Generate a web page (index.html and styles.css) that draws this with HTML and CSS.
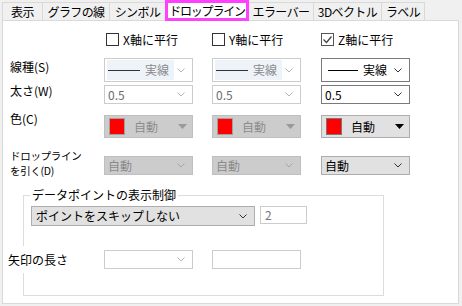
FILE: index.html
```html
<!DOCTYPE html>
<html lang="ja">
<head>
    <meta charset="UTF-8">
    <title>ドロップライン</title>
    <link rel="stylesheet" href="styles.css">
</head>
<body>
    <div class="tabs">
        <div class="tab t-1">表示</div>
        <div class="tab t-2">グラフの線</div>
        <div class="tab t-3">シンボル</div>
        <div class="tab t-4 active">ドロップライン</div>
        <div class="tab t-5">エラーバー</div>
        <div class="tab t-6">3Dベクトル</div>
        <div class="tab t-7">ラベル</div>
    </div>

    <div class="panel">
        <!-- 軸に平行 -->
        <div class="row r-check">
            <div class="label"></div>
            <label class="cell check c1"><span class="box"></span>X軸に平行</label>
            <label class="cell check c2"><span class="box"></span>Y軸に平行</label>
            <label class="cell check c3"><span class="box checked"><svg width="11" height="11" viewBox="0 0 11 11"><polyline points="1.5,5.5 4.5,8.5 9.5,2.5" fill="none" stroke="#444" stroke-width="1.3"/></svg></span>Z軸に平行</label>
        </div>

        <div class="row r-line">
            <div class="label lb-line">線種(S)</div>
            <div class="cell combo off">
                <div class="lt hl"><span class="stroke"></span><span>実線</span></div>
                <svg class="chev" width="8" height="5" viewBox="0 0 8 5"><polyline points="0.5,0.5 4,4 7.5,0.5" fill="none" stroke="currentColor"/></svg>
            </div>
            <div class="cell combo off c2">
                <div class="lt hl"><span class="stroke"></span><span>実線</span></div>
                <svg class="chev" width="8" height="5" viewBox="0 0 8 5"><polyline points="0.5,0.5 4,4 7.5,0.5" fill="none" stroke="currentColor"/></svg>
            </div>
            <div class="cell combo on c3">
                <div class="lt"><span class="stroke"></span><span>実線</span></div>
                <svg class="chev" width="8" height="5" viewBox="0 0 8 5"><polyline points="0.5,0.5 4,4 7.5,0.5" fill="none" stroke="currentColor"/></svg>
            </div>
        </div>

        <div class="row r-width">
            <div class="label lb-width">太さ(W)</div>
            <div class="cell combo off">
                <span class="val">0.5</span>
                <svg class="chev" width="8" height="5" viewBox="0 0 8 5"><polyline points="0.5,0.5 4,4 7.5,0.5" fill="none" stroke="currentColor"/></svg>
            </div>
            <div class="cell combo off c2">
                <span class="val">0.5</span>
                <svg class="chev" width="8" height="5" viewBox="0 0 8 5"><polyline points="0.5,0.5 4,4 7.5,0.5" fill="none" stroke="currentColor"/></svg>
            </div>
            <div class="cell combo on c3">
                <span class="val">0.5</span>
                <svg class="chev" width="8" height="5" viewBox="0 0 8 5"><polyline points="0.5,0.5 4,4 7.5,0.5" fill="none" stroke="currentColor"/></svg>
            </div>
        </div>

        <div class="row r-color">
            <div class="label lb-color">色(C)</div>
            <div class="cell colorbtn off">
                <span class="swatch"></span><span class="val">自動</span>
                <svg class="tri" width="9" height="5" viewBox="0 0 9 5"><polygon points="0,0 9,0 4.5,5" fill="currentColor"/></svg>
            </div>
            <div class="cell colorbtn off c2">
                <span class="swatch"></span><span class="val">自動</span>
                <svg class="tri" width="9" height="5" viewBox="0 0 9 5"><polygon points="0,0 9,0 4.5,5" fill="currentColor"/></svg>
            </div>
            <div class="cell colorbtn on c3">
                <span class="swatch"></span><span class="val">自動</span>
                <svg class="tri" width="9" height="5" viewBox="0 0 9 5"><polygon points="0,0 9,0 4.5,5" fill="currentColor"/></svg>
            </div>
        </div>

        <div class="row r-drop">
            <div class="label lb-drop">ドロップライン<br>を引く(D)</div>
            <div class="cell combo grey off">
                <span class="val">自動</span>
                <svg class="chev" width="8" height="5" viewBox="0 0 8 5"><polyline points="0.5,0.5 4,4 7.5,0.5" fill="none" stroke="currentColor"/></svg>
            </div>
            <div class="cell combo grey off c2">
                <span class="val">自動</span>
                <svg class="chev" width="8" height="5" viewBox="0 0 8 5"><polyline points="0.5,0.5 4,4 7.5,0.5" fill="none" stroke="currentColor"/></svg>
            </div>
            <div class="cell combo grey on c3">
                <span class="val">自動</span>
                <svg class="chev" width="8" height="5" viewBox="0 0 8 5"><polyline points="0.5,0.5 4,4 7.5,0.5" fill="none" stroke="currentColor"/></svg>
            </div>
        </div>

        <!-- データポイントの表示制御 -->
        <div class="group">
            <span class="legend">データポイントの表示制御</span>
            <div class="skip-row">
                <div class="combo grey on skip">
                    <span class="val">ポイントをスキップしない</span>
                    <svg class="chev" width="8" height="5" viewBox="0 0 8 5"><polyline points="0.5,0.5 4,4 7.5,0.5" fill="none" stroke="currentColor"/></svg>
                </div>
                <div class="num">2</div>
            </div>
            <div class="row r-arrow">
                <div class="label lb-arrow"><span>矢印の長さ</span></div>
                <div class="cell combo off">
                    <span class="val"></span>
                    <svg class="chev" width="8" height="5" viewBox="0 0 8 5"><polyline points="0.5,0.5 4,4 7.5,0.5" fill="none" stroke="currentColor"/></svg>
                </div>
                <div class="cell combo off c2">
                    <span class="val"></span>
                </div>
            </div>
        </div>
    </div>
</body>
</html>
```

FILE: styles.css
```css
body { margin: 0; width: 462px; height: 306px; overflow: hidden; background-color: #f0f0f0; font-family: "Noto Sans CJK JP", sans-serif; font-size: 12px; color: #000; }

.tabs { display: flex; align-items: flex-end; height: 20px; padding-left: 2px; }
.tab { box-sizing: border-box; height: 18px; display: flex; align-items: center; justify-content: center; line-height: 1; white-space: nowrap; letter-spacing: -0.6px; background-color: #f0f0f0; border: 1px solid #d9d9d9; border-left: none; border-bottom: none; }
.tab.t-1 { width: 41px; border-left: 1px solid #d9d9d9; }
.tab.t-2 { width: 67px; }
.tab.t-3 { width: 56px; }
.tab.t-4 { width: 84px; }
.tab.t-5 { width: 65px; }
.tab.t-6 { width: 68px; }
.tab.t-7 { width: 43px; }
.tab.active { height: 21px; margin-bottom: -1px; margin-left: -1px; border: 3px solid #ff40ff; background-color: white; letter-spacing: -1.2px; position: relative; z-index: 1; }

.panel { box-sizing: border-box; margin-left: 2px; width: 457px; height: 284px; background-color: white; border: 1px solid #d9d9d9; }

.row { display: flex; align-items: center; }
.label { width: 94px; padding-left: 7px; flex: none; line-height: 14px; }
.cell { box-sizing: border-box; width: 89px; flex: none; }
.c2 { margin-left: 19px; }
.c3 { margin-left: 20px; }

.r-check { margin-top: 12px; height: 13px; }
.r-line { margin-top: 12px; height: 24px; }
.r-width { margin-top: 3px; height: 19px; }
.r-color { margin-top: 11px; height: 23px; }
.r-drop { margin-top: 18px; height: 19px; }

.lb-line { align-self: flex-start; margin-top: 2px; }
.lb-width { align-self: flex-start; margin-top: -1px; }
.lb-color { align-self: flex-start; margin-top: -3px; }
.lb-drop { font-size: 10.5px; line-height: 15.5px; margin-bottom: 5px; letter-spacing: -0.3px; white-space: nowrap; }

.check { display: flex; align-items: center; gap: 4px; height: 13px; line-height: 1; }
.check.c1 { padding-left: 2px; }
.check .box { box-sizing: border-box; width: 13px; height: 13px; border: 1px solid #333; background-color: white; display: flex; align-items: center; justify-content: center; }
.check .box.checked { border-color: #555; }

.combo { height: 100%; display: flex; align-items: center; border: 1px solid #cccccc; background-color: white; padding: 0 7px 0 2px; line-height: 1; }
.combo .val { flex: 1; padding-left: 1px; }
.combo .chev { flex: none; color: #b4b4b4; }
.combo.off { color: #6d6d6d; }
.combo.on { border-color: #7a7a7a; color: #000; }
.combo.on .chev { color: #333; }
.combo.grey { background-color: #cccccc; border-color: #bfbfbf; color: #8a8a8a; }
.combo.grey .chev { color: #a6a6a6; }
.combo.grey.on { background-color: #e1e1e1; border-color: #adadad; color: #000; }
.combo.grey.on .chev { color: #333; }

.lt { flex: 1; display: flex; align-items: center; height: 20px; padding-left: 1px; color: #000; }
.lt.hl { flex: none; width: 66px; margin-right: auto; background-color: #eef3fa; color: #8a8a8a; }
.lt .stroke { width: 32px; height: 1px; background-color: #000; margin-right: 5px; }
.lt.hl .stroke { background-color: #333; }
.combo.on .lt { padding-left: 4px; }
.combo.on .lt .stroke { width: 30px; }

.colorbtn { height: 100%; display: flex; align-items: center; padding: 0 5px 0 4px; background-color: #cccccc; border: 1px solid #bfbfbf; color: #8c8c8c; line-height: 1; }
.colorbtn .swatch { box-sizing: border-box; width: 16px; height: 17px; background-color: red; border: 1px solid #a0a0a0; margin-right: 9px; }
.colorbtn .val { flex: 1; }
.colorbtn .tri { color: #999; }
.colorbtn.on { background-color: #e1e1e1; border-color: #adadad; color: #000; }
.colorbtn.on .swatch { border-color: #777; }
.colorbtn.on .tri { color: #000; }

.group { box-sizing: border-box; margin: 20px 0 0 20px; width: 361px; height: 101px; padding: 10px 7px 0; border: 1px solid #dcdcdc; position: relative; }
.legend { position: absolute; top: -8px; left: 6px; padding: 0 2px; background-color: white; line-height: 14px; }
.skip-row { display: flex; align-items: flex-start; gap: 5px; }
.combo.skip { box-sizing: border-box; width: 224px; height: 20px; padding-left: 3px; }
.num { box-sizing: border-box; width: 47px; height: 18px; border: 1px solid #cccccc; padding-left: 4px; color: #777; line-height: 16px; }
.r-arrow { margin: 24px 0 0 -28px; height: 19px; }
.lb-arrow { width: 96px; padding-left: 5px; }
.lb-arrow span { background-color: white; padding: 5px 0; }
```
